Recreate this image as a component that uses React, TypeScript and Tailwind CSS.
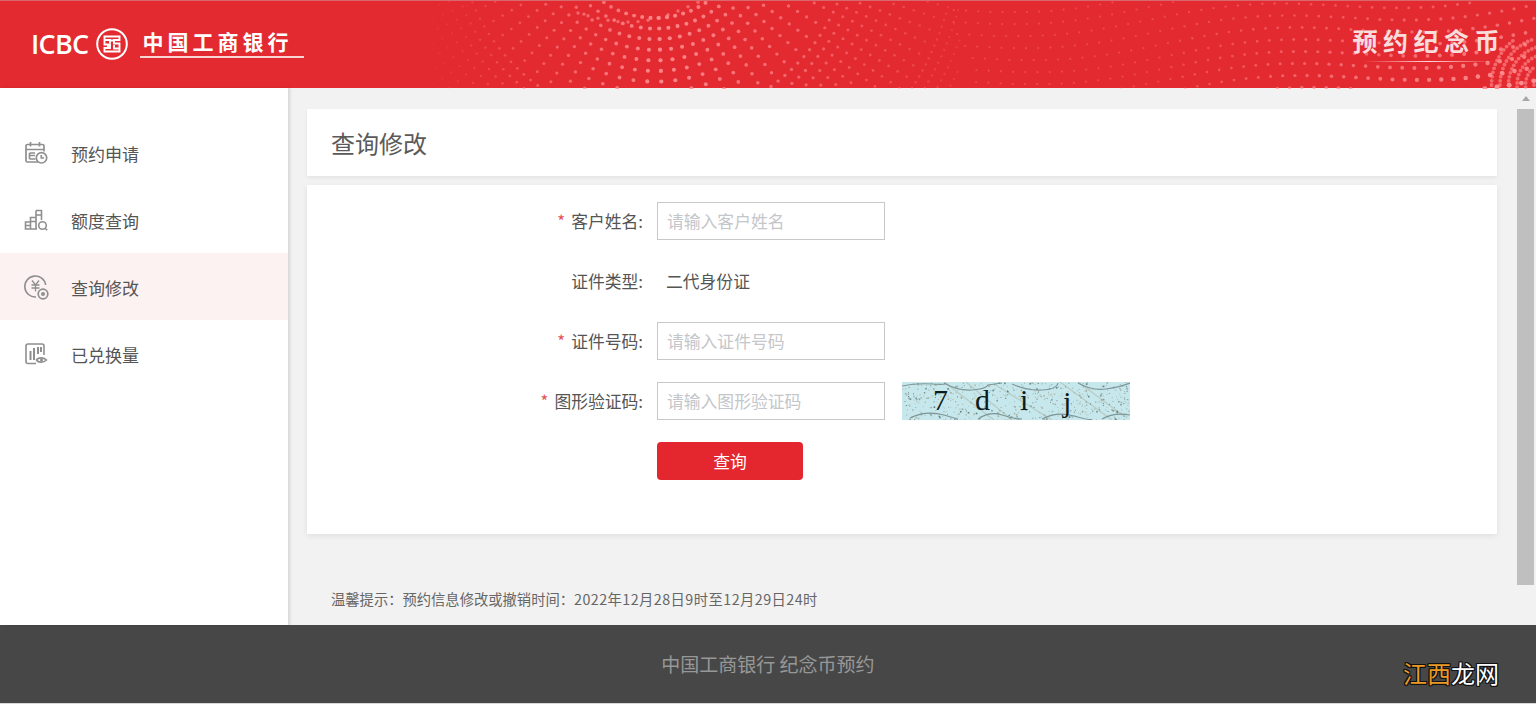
import React from "react";

const F = { fontFamily: '"Noto Sans CJK SC", "Noto Sans", sans-serif' };

function rng(seed: number) {
  let s = seed;
  return () => {
    s = (s * 16807) % 2147483647;
    return s / 2147483647;
  };
}

function dots() {
  const out: { x: number; y: number; r: number; o: number }[] = [];
  // fan swirl: dots on radial lines spreading from above the header
  const cx = 655, cy = -75;
  for (let ri = 0; ri < 40; ri++) {
    const rad = 92 + ri * 10.6;
    const step = rad > 300 ? 0.0225 : rad > 190 ? 0.045 : 0.09;
    const n = Math.round(Math.PI / step);
    for (let i = 0; i <= n; i++) {
      const a = i * step;
      const x = cx + rad * Math.cos(a);
      const y = cy + rad * Math.sin(a);
      if (y < 0 || y > 88 || x < 430 || x > 960) continue;
      const d = Math.abs(x - 660);
      const span = x > 660 ? 400 : 270;
      const o = Math.max(0, 0.92 - d / span);
      if (o > 0.06) out.push({ x, y, r: 0.9 + 1.2 * Math.max(0, 1 - d / (span - 30)), o });
    }
  }
  // top arc above the fan
  for (let i = 0; i < 13; i++) {
    const x = 578 + i * 10;
    const y = 12 + 14 * Math.sin((i / 12) * Math.PI) - i * 0.9;
    out.push({ x, y, r: 1.7, o: 0.6 });
  }
  // right field
  for (let gx = 0; gx < 56; gx++) {
    for (let gy = -4; gy < 10; gy++) {
      const x = 965 + gx * 12.2 + gy * 3.5 + 5 * Math.sin(gy);
      const y = gy * 12 - gx * 0.9 + 45 + 8 * Math.sin(gx / 5);
      if (y < 1 || y > 88 || x > 1536) continue;
      const t = Math.max(0, Math.min(1, (x - 1150) / 350));
      const o = 0.3 + 0.5 * t * (y / 88) + 0.2 * t;
      out.push({ x, y, r: 1.1 + 1.0 * t * (y / 88) + 0.4 * t, o });
    }
  }
  // corner arcs
  const bx = 1548, by = 84;
  for (let ri = 0; ri < 6; ri++) {
    const rad = 14 + ri * 8.5;
    const n = Math.round((Math.PI * rad) / 4.2);
    for (let i = 0; i <= n; i++) {
      const a = Math.PI / 2 + (i / n) * Math.PI;
      const x = bx + rad * Math.cos(a);
      const y = by + rad * Math.sin(a);
      if (y < 38 || y > 88 || x > 1536) continue;
      out.push({ x, y, r: 1.9, o: 0.62 });
    }
  }
  return out;
}

function Captcha() {
  const r = rng(4242);
  const specks = Array.from({ length: 560 }, () => ({ x: r() * 228, y: r() * 38, s: r() > 0.75 ? 1.6 : 1, c: r() > 0.55 ? "#4f6f70" : "#a39f8c", o: 0.35 + r() * 0.55 }));
  const glyph = "absolute text-[30px] leading-[38px] text-[#0d1a1c]";
  const serif = { fontFamily: '"Liberation Serif", serif' };
  return (
    <div className="relative ml-[17px] flex h-[38px] w-[228px] items-center bg-[#c6e8ec]">
      <svg className="absolute inset-0" width="228" height="38" viewBox="0 0 228 38">
        <path d="M42 0L92 38M92 2L150 38M64 0L110 38M158 0L210 38M176 0L222 34" fill="none" stroke="#aeb0a0" strokeWidth="1.3" opacity="0.5" />
        {specks.map((s, i) => (
          <rect key={i} x={s.x} y={s.y} width={s.s} height={s.s} fill={s.c} opacity={s.o} />
        ))}
        <path d="M0 4Q14 1 30 2T42 1M42 1Q56 9 70 8T86 3L100 1M110 2Q125 9 140 8T156 1M176 1Q190 9 204 7T228 1" fill="none" stroke="#7f9597" strokeWidth="1.200" />
        <path d="M8 36Q24 28 42 33T54 37M76 37Q88 29 100 33T120 37M140 37Q155 29 172 34T190 37M200 37Q212 30 228 33" fill="none" stroke="#7f9597" strokeWidth="1.200" />
      </svg>
      <span className={`${glyph} left-[31px] top-[-1px]`} style={serif}>7</span>
      <span className={`${glyph} left-[73px] top-[-1px]`} style={serif}>d</span>
      <span className={`${glyph} left-[118px] top-[-1px]`} style={serif}>i</span>
      <span className={`${glyph} left-[161px] top-[1px]`} style={serif}>j</span>
    </div>
  );
}

const IconCalendar = () => (
  <svg width="24" height="24" viewBox="0 0 24 24" fill="none" stroke="#8f8f8f" strokeWidth="1.7">
    <path d="M14 21H3.500A1.500 1.500 0 0 1 2 19.500V5a1.500 1.500 0 0 1 1.500-1.500h15A1.500 1.500 0 0 1 20 5v5.500" />
    <path d="M6.500 1v4.500M15.500 1v4.500M2 8.500h18M5.500 12h5.500M5.500 14.500h5.500M5.500 18h6M5.500 12v6" />
    <circle cx="17.500" cy="16.800" r="5.200" fill="#fff" />
    <path d="M17.300 14v3h2.700" />
  </svg>
);
const IconBars = () => (
  <svg width="24" height="24" viewBox="0 0 24 24" fill="none" stroke="#8f8f8f" strokeWidth="1.600">
    <path d="M1.500 14h5v7h-5zM1.500 17.500h5M6.500 9.500H12V21H6.500zM6.500 13.500H12M12 2.500h5.500V12M12 2.500V21M12 7h5.500M6.500 21H13" />
    <circle cx="18.500" cy="17.500" r="3.800" fill="#fff" />
    <path d="M21.200 20.300l2 2" />
  </svg>
);
const IconCoin = () => (
  <svg width="26" height="26" viewBox="0 0 26 26" fill="none" stroke="#8f8f8f" strokeWidth="1.600">
    <path d="M13 23A10.500 10.500 0 1 1 22.700 11" />
    <path d="M9 6.500l3.500 4.500L16 6.500M8.500 11h8M8.500 14h8M12.500 11v6.500" strokeWidth="1.300" />
    <circle cx="20" cy="20" r="4.800" strokeWidth="1.700" />
    <circle cx="20" cy="20" r="2" fill="#8f8f8f" stroke="none" />
  </svg>
);
const IconChart = () => (
  <svg width="24" height="24" viewBox="0 0 24 24" fill="none" stroke="#8f8f8f" strokeWidth="1.600">
    <path d="M12 21.500H4A2 2 0 0 1 2 19.500V4a2 2 0 0 1 2-2h14a2 2 0 0 1 2 2v9" />
    <path d="M6.500 9v9M10 6v12M14 5v7M17 5v5" strokeWidth="2" />
    <path d="M12.500 18c1.500-2.800 7-2.800 10 0-3 2.800-8.500 2.800-10 0z" fill="#fff" />
    <circle cx="17.500" cy="18" r="1.500" fill="#8f8f8f" stroke="none" />
  </svg>
);

const Emblem = () => (
  <svg width="32" height="32" viewBox="0 0 32 32" fill="none" stroke="#fff" strokeWidth="2">
    <circle cx="16" cy="16" r="14.800" />
    <path d="M8.500 8.500h15v3.500h-5.500v3.500h5.500v8h-15v-3.500h5.500v-3.500H8.500zM11 18.500h3M18 12.500h-4" strokeWidth="1.900" />
    <path d="M8.500 12h5.500v3.500M23.500 20.500H18v-3.500" strokeWidth="1.900" />
  </svg>
);

const menu = [
  { label: "预约申请", icon: <IconCalendar /> },
  { label: "额度查询", icon: <IconBars /> },
  { label: "查询修改", icon: <IconCoin />, active: true },
  { label: "已兑换量", icon: <IconChart /> },
];

function Field({ label, placeholder }: { label: string; placeholder: string }) {
  return (
    <div className="flex h-[38px] items-center">
      <div className="mt-[1px] flex w-[336px] justify-end text-[16.800px] text-[#555]">
        <span className="mr-[6px] text-[#e4555b]">*</span>
        <span>{label}:</span>
      </div>
      <input
        readOnly
        placeholder={placeholder}
        className="ml-[14px] h-[38px] w-[228px] border border-[#c8c8c8] bg-white px-[9px] text-[16.800px] outline-none placeholder:text-[#c4c6ca]"
      />
    </div>
  );
}

export default function App() {
  const ds = dots();
  return (
    <div className="flex h-[704px] w-full flex-col overflow-hidden bg-[#f2f2f2]" style={F}>
      <header className="relative flex h-[88px] shrink-0 items-start justify-between border-t border-[#d9676b] bg-[#e42a31]">
        <svg className="absolute inset-0" width="1536" height="88" viewBox="0 0 1536 88">
          {ds.map((d, i) => (
            <circle key={i} cx={d.x.toFixed(1)} cy={d.y.toFixed(1)} r={d.r.toFixed(2)} fill="#ff8f92" opacity={d.o.toFixed(2)} />
          ))}
        </svg>
        <div className="relative ml-[31px] mt-[27px] flex items-start">
          <span className="mt-[1px] text-[27px] font-semibold leading-[30px] tracking-[-0.7px] text-white" style={{ fontFamily: '"Open Sans", sans-serif' }}>ICBC</span>
          <span className="ml-[8px] flex"><Emblem /></span>
          <div className="ml-[12px] flex flex-col">
            <span className="pl-[2px] text-[21px] font-bold leading-[26px] tracking-[4px] text-white">中国工商银行</span>
            <span className="mt-[2px] h-[1.500px] w-[164px] bg-[#f8d4d5]" />
          </div>
        </div>
        <div className="relative mr-[31px] mt-[22px] flex flex-col items-center">
          <span className="text-[25px] font-bold leading-[34px] tracking-[5.500px] text-[#f9dcdc]">预约纪念币</span>
          <span className="mt-[4px] h-[1px] w-[130px] bg-gradient-to-r from-transparent via-[#ffd9d9] to-transparent" />
        </div>
      </header>

      <div className="flex min-h-0 flex-1">
        <aside className="z-10 w-[288px] shrink-0 bg-white pt-[31px] shadow-[2px_0_3px_rgba(0,0,0,0.12)]">
          {menu.map((m) => (
            <div key={m.label} className={`flex h-[67px] items-center ${m.active ? "bg-[#fdf2f2]" : ""}`}>
              <span className="ml-[23px] flex w-[26px] justify-center">{m.icon}</span>
              <span className="ml-[22px] mt-[3px] text-[17px] text-[#555]">{m.label}</span>
            </div>
          ))}
        </aside>

        <main className="flex min-w-0 flex-1 flex-col pl-[19px] pr-[20px] pt-[21px]">
          <div className="flex h-[67px] shrink-0 items-center bg-white pl-[24px] shadow-[0_2px_4px_rgba(0,0,0,0.06)]">
            <h1 className="text-[24px] leading-none text-[#5a5a5a]">查询修改</h1>
          </div>
          <div className="mt-[9px] flex h-[349px] shrink-0 flex-col gap-[22px] bg-white pt-[17px] shadow-[0_2px_6px_rgba(0,0,0,0.08)]">
            <Field label="客户姓名" placeholder="请输入客户姓名" />
            <div className="flex h-[38px] items-center pt-[1px] text-[16.800px] text-[#555]">
              <div className="w-[336px] text-right">证件类型:</div>
              <span className="ml-[23px]">二代身份证</span>
            </div>
            <Field label="证件号码" placeholder="请输入证件号码" />
            <div className="flex items-center">
              <Field label="图形验证码" placeholder="请输入图形验证码" />
              <Captcha />
            </div>
            <button className="ml-[350px] h-[38px] w-[146px] rounded-[4px] bg-[#e4262e] pt-[1px] text-[16.800px] text-white">查询</button>
          </div>
          <p className="mt-[54px] pl-[24px] text-[14.300px] leading-[22px] text-[#666]">
            温馨提示{"\uFF1A"}预约信息修改或撤销时间{"\uFF1A"}<span className="tracking-[0.45px]">2022年12月28日9时至12月29日24时</span>
          </p>
        </main>

        <div className="flex w-[19px] shrink-0 flex-col items-center pr-[2px]">
          <span className="mt-[8px] h-0 w-0 border-x-[4px] border-b-[5px] border-x-transparent border-b-[#a8a8a8]" />
          <span className="mt-[8px] h-[476px] w-[17px] bg-[#bfbfbf]" />
        </div>
      </div>

      <footer className="relative flex h-[79px] shrink-0 items-center justify-center border-b border-[#d8d8d8] bg-[#474747]">
        <span className="text-[19px] text-[#979797]">中国工商银行 纪念币预约</span>
        <span className="absolute left-[1403px] top-[33px] text-[24px] leading-[30px] [text-shadow:1px_0_#111,-1px_0_#111,0_1px_#111,0_-1px_#111,1px_1px_#111,-1px_-1px_#111,1px_-1px_#111,-1px_1px_#111]">
          <span className="text-[#ea9a25]">江西</span>
          <span className="text-white">龙网</span>
        </span>
      </footer>
    </div>
  );
}
